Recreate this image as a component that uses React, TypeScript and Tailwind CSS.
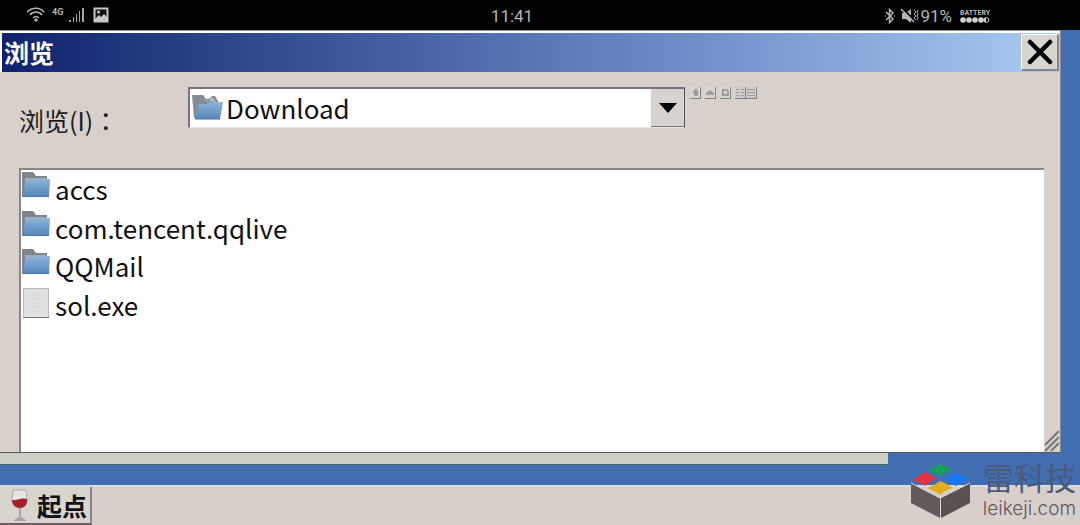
import React from "react";

const files = [
  { name: "accs", folder: true },
  { name: "com.tencent.qqlive", folder: true },
  { name: "QQMail", folder: true },
  { name: "sol.exe", folder: false },
];

const FolderIcon = () => (
  <svg width="30" height="28" viewBox="0 0 30 28" aria-hidden="true">
    <defs>
      <linearGradient id="folder" x1="0" y1="0" x2="0" y2="1">
        <stop offset="0" stopColor="#8db4dc" />
        <stop offset="1" stopColor="#5585b8" />
      </linearGradient>
    </defs>
    <path d="M1 1h11l3 4h11v21H1z" fill="#7c8590" />
    <path d="M4 7h21v4H4z" fill="#a3adb8" />
    <path d="M4 10h9l3-2h13l-1 17.500H2.500z" fill="url(#folder)" />
    <path d="M2.500 25.500H28" stroke="#4a74a3" />
  </svg>
);

const OpenFolderIcon = () => (
  <svg width="33" height="28" viewBox="0 0 33 28" aria-hidden="true">
    <path d="M1 2h11l3 4h3l3-3h3l3 5v17H3z" fill="#858b94" />
    <path d="M12 7l5 2 4-5 4 5z" fill="#b9bfc6" />
    <path d="M8 11h8l2-2h14l-3 17H4z" fill="url(#folder)" />
    <path d="M4 26h25" stroke="#4a74a3" />
  </svg>
);

const FileIcon = () => (
  <svg width="30" height="32" viewBox="0 0 30 32" aria-hidden="true">
    <path d="M2.500 1.500h25v29h-25z" fill="#e2dfe1" stroke="#bdb9bb" />
    <path d="M7 8h16M7 12h16M7 16h16M7 20h16M7 24h10" stroke="#dad6da" />
    <path d="M2 30.500h26" stroke="#777" />
  </svg>
);

const tools = [
  { label: "向上一级", d: "M4 9V6H2l4-5 3 5H8v3z" },
  { label: "桌面", d: "M1 8V6l4-3 4 3v2z" },
  { label: "新建文件夹", d: "M2 2h5l2 2v5H2zM4 4v3h3V4z" },
];

const StatusBar = () => (
  <header className="grid h-[30px] grid-cols-3 items-center bg-black font-[Roboto,sans-serif] text-[#b5b5b5]">
    <div className="flex items-center pl-[26px]">
      <svg width="20" height="16" viewBox="0 0 20 16" fill="none" stroke="#b5b5b5" strokeWidth="1.500">
        <path d="M1 5c5-5 13-5 17 0M4 8c3-4 9-4 12 0M7 11c2-2 4-2 6 0" />
        <circle cx="10" cy="13" r="1" fill="#b5b5b5" />
      </svg>
      <span className="ml-[6px] h-4 pt-px text-[9px] leading-[8px] font-bold">4G</span>
      <svg className="ml-[6px]" width="16" height="16" viewBox="0 0 16 16" fill="#a5a5a5">
        <path d="M0 13h2v2H0zM4 10h1v5H4zM7 7h1v8H7zM10 4h1v11h-1zM13 1h2v14h-2z" />
      </svg>
      <svg className="ml-2" width="16" height="16" viewBox="0 0 16 16">
        <path d="M1.500 1.500h13v13h-13z" fill="#111" stroke="#c8c8c8" strokeWidth="2" />
        <circle cx="5.500" cy="5" r="1.500" fill="#c8c8c8" />
        <path d="M2 12l4-4 2 2 3-3 4 4v3H2z" fill="#c8c8c8" />
      </svg>
    </div>
    <span className="pt-[3px] pr-[56px] text-center text-[17px] leading-none">11:41</span>
    <div className="flex items-center justify-end pt-[2px] pr-[90px]">
      <svg width="12" height="16" viewBox="0 0 12 16" fill="none" stroke="#b5b5b5" strokeWidth="1.500">
        <path d="M2 4l7 7-3.500 3.500v-13L9 5l-7 7M1 8h1M10 8h1" />
      </svg>
      <svg className="ml-1" width="20" height="16" viewBox="0 0 20 16">
        <path d="M2 5h4l5-4v14l-5-4H2z" fill="#b5b5b5" />
        <path d="M3 1l12 12" stroke="#000" strokeWidth="2" />
        <path d="M1 1l13 13" stroke="#b5b5b5" strokeWidth="1.500" />
        <path d="M14 2l2 2-2 2 2 2-2 2 2 2M18 2l-1 2 1 2-1 2 1 2-1 2" stroke="#b5b5b5" fill="none" />
      </svg>
      <span className="text-[17px] leading-none">91%</span>
      <div className="ml-2 flex w-[30px] flex-col items-center">
        <span className="text-[7px] leading-[8px] font-bold">BATTERY</span>
        <svg width="30" height="7" viewBox="0 0 30 7" fill="#d0d0d0">
          <circle cx="3" cy="3" r="2.800" />
          <circle cx="9" cy="3" r="2.800" />
          <circle cx="15" cy="3" r="2.800" />
          <circle cx="21" cy="3" r="2.800" />
          <path d="M26 .5a2.500 2.500 0 0 0 0 5z" />
          <circle cx="26.500" cy="3" r="2.300" fill="none" stroke="#d0d0d0" />
        </svg>
      </div>
    </div>
  </header>
);

const TitleBar = () => (
  <div className="flex h-[39px] items-center justify-between bg-linear-to-r from-[#11226c] via-[#5875b6] to-[#a9cbf3] pr-px pl-[2px]">
    <h1 className="text-[25px] leading-none font-bold text-white">浏览</h1>
    <button
      aria-label="关闭"
      className="flex h-[37px] w-[38px] items-center justify-center border-t border-r-2 border-b-2 border-l border-t-white border-r-[#85858a] border-b-[#85858a] border-l-white bg-[#d8d4ce]"
    >
      <svg width="26" height="26" viewBox="0 0 26 26" stroke="#000" strokeWidth="4.500" strokeLinecap="round">
        <path d="M3 3l20 20M23 3L3 23" />
      </svg>
    </button>
  </div>
);

const LookIn = () => (
  <div className="flex h-[53px] items-start pl-[18px]">
    <label htmlFor="folder-select" className="w-[169px] pt-[15px] text-[25px] leading-[36px] text-[#1c1c1c]">
      浏览(I)
      <span lang="zh-TW" className="font-['Noto_Sans_CJK_TC',sans-serif]">
        ：
      </span>
    </label>
    <div className="relative w-[497px]">
      <select
        id="folder-select"
        className="block h-[41px] w-full appearance-none border-t-2 border-r border-b border-l-2 border-t-[#77747a] border-r-[#55555a] border-b-[#e8e4e0] border-l-[#77747a] bg-white pb-[2px] pl-[36px] text-[26px] leading-[38px] text-[#111]"
      >
        <option>Download</option>
      </select>
      <div className="pointer-events-none absolute top-[6px] left-[3px]">
        <OpenFolderIcon />
      </div>
      <div className="pointer-events-none absolute top-[2px] right-[1px] flex h-[38px] w-[33px] items-center justify-center border-b border-b-[#77747a] bg-[#d7d2cd]">
        <svg width="18" height="10" viewBox="0 0 18 10">
          <path d="M0 0h18L9 10z" />
        </svg>
      </div>
    </div>
    <div className="flex gap-1 pl-[5px]">
      {tools.map((tool) => (
        <button
          key={tool.label}
          aria-label={tool.label}
          className="h-3 w-[11px] border-r border-b border-[#85817f] bg-[#d9d5d0]"
        >
          <svg width="10" height="11" viewBox="0 0 10 11" fill="#a09c98" fillRule="evenodd">
            <path d={tool.d} />
          </svg>
        </button>
      ))}
      <div className="flex">
        <button aria-label="列表" className="h-3 w-[11px] border-r border-b border-[#85817f] bg-[#d0ccc9]">
          <svg width="10" height="11" viewBox="0 0 10 11" stroke="#a09c98">
            <path d="M1 2.500h3M6 2.500h3M1 5.500h3M6 5.500h3M1 8.500h3M6 8.500h3" />
          </svg>
        </button>
        <button aria-label="详细信息" className="h-3 w-[11px] border-r border-b border-[#85817f] bg-[#d0ccc9]">
          <svg width="10" height="11" viewBox="0 0 10 11" stroke="#a09c98">
            <path d="M1 2.500h8M1 5.500h8M1 8.500h8" />
          </svg>
        </button>
      </div>
    </div>
  </div>
);

const FileList = () => (
  <div className="flex flex-1 pt-[28px] pl-[18px]">
    <div className="flex-1 border-t-2 border-l-2 border-[#89868a] bg-white">
      <ul className="grid h-[154px] grid-rows-4">
        {files.map((file) => (
          <li key={file.name}>
            <button className="flex h-full items-center text-[26px] leading-[38px] text-[#111]">
              <span className="mr-1 flex h-9 w-[30px] items-start">
                {file.folder ? <FolderIcon /> : <FileIcon />}
              </span>
              {file.name}
            </button>
          </li>
        ))}
      </ul>
    </div>
    <svg className="self-end" width="16" height="22" viewBox="0 0 16 22" stroke="#77777a" strokeWidth="2">
      <path d="M1 15L15 1M1 21L15 7M7 21l8-8" />
    </svg>
  </div>
);

const Watermark = () => (
  <div className="absolute right-[4px] bottom-0 flex items-end">
    <svg className="mb-[6px]" width="60" height="56" viewBox="0 0 60 56" aria-hidden="true">
      <path d="M0 20l29 15v20L0 40z" fill="#625a58" />
      <path d="M59 20L30 35v20l29-15z" fill="#5b5250" />
      <path d="M0 20l29 15 30-15M29.500 35v20" fill="none" stroke="#ded5d4" />
      <path d="M29 1c5 2 9 3 12 6-4 1-8 3-12 6-4-3-8-4-12-5 4-3 8-4 12-7z" fill="#16a05c" />
      <path d="M14 9c4 2 8 4 12 7-4 1-8 3-12 7-4-3-8-5-12-6 4-3 8-5 12-8z" fill="#e43243" />
      <path d="M45 9c4 3 8 5 13 7-5 2-9 4-13 7-4-3-8-5-12-7 4-2 8-4 12-7z" fill="#1678f0" />
      <path d="M29 18c5 2 9 4 13 7-5 1-9 3-13 7-4-3-8-5-13-7 5-2 9-4 13-7z" fill="#e5ad1c" />
    </svg>
    <div className="ml-3 flex flex-col items-end">
      <span className="text-[31px] leading-[32px] text-[#4a5a7a]">雷科技</span>
      <span className="font-[Inter,sans-serif] text-[19px] leading-[32px] font-light text-[#5d5858]">leikeji.com</span>
    </div>
  </div>
);

const Taskbar = () => (
  <footer className="flex h-10 border-t-2 border-[#dcdcd2] bg-[#d8cfcb]">
    <button className="flex w-[92px] items-center gap-2 border-r-2 border-b-2 border-r-[#85858a] border-b-[#6f5c5c] bg-[#d8d5ce] pl-[10px] text-[25px] leading-none font-bold text-[#111]">
      <svg width="19" height="33" viewBox="0 0 19 33" aria-hidden="true">
        <path d="M3 1h13l1 10c0 5-3 8-7 8s-8-3-8-8z" fill="#e8e5e1" stroke="#aaa7a5" />
        <path d="M2 11c5 1 9-3 15-1 1 5-3 9-7 9s-8-3-8-8z" fill="#a51e2a" />
        <path d="M9 19h2v9l5 3v1H4v-1l5-3z" fill="#a9a7a6" />
      </svg>
      起点
    </button>
  </footer>
);

const App = () => {
  return (
    <div className="relative flex min-h-screen flex-col bg-[#416eb0] font-['Noto_Sans_CJK_SC',sans-serif]">
      <StatusBar />
      <main className="mr-[19px] flex flex-1 flex-col border-t border-r border-b border-t-[#8a9a9a] border-r-[#8a8a8a] border-b-[#55555a] bg-[#d8d0cb]">
        <div className="border-t-2 border-l-2 border-white">
          <TitleBar />
        </div>
        <div className="flex flex-1 flex-col pt-[15px] pl-px">
          <LookIn />
          <FileList />
        </div>
      </main>
      <div className="mr-[192px] h-3 border-b border-[#55606a] bg-[#ccd0c5]" />
      <div className="h-5" />
      <Taskbar />
      <Watermark />
    </div>
  );
};

export default App;
